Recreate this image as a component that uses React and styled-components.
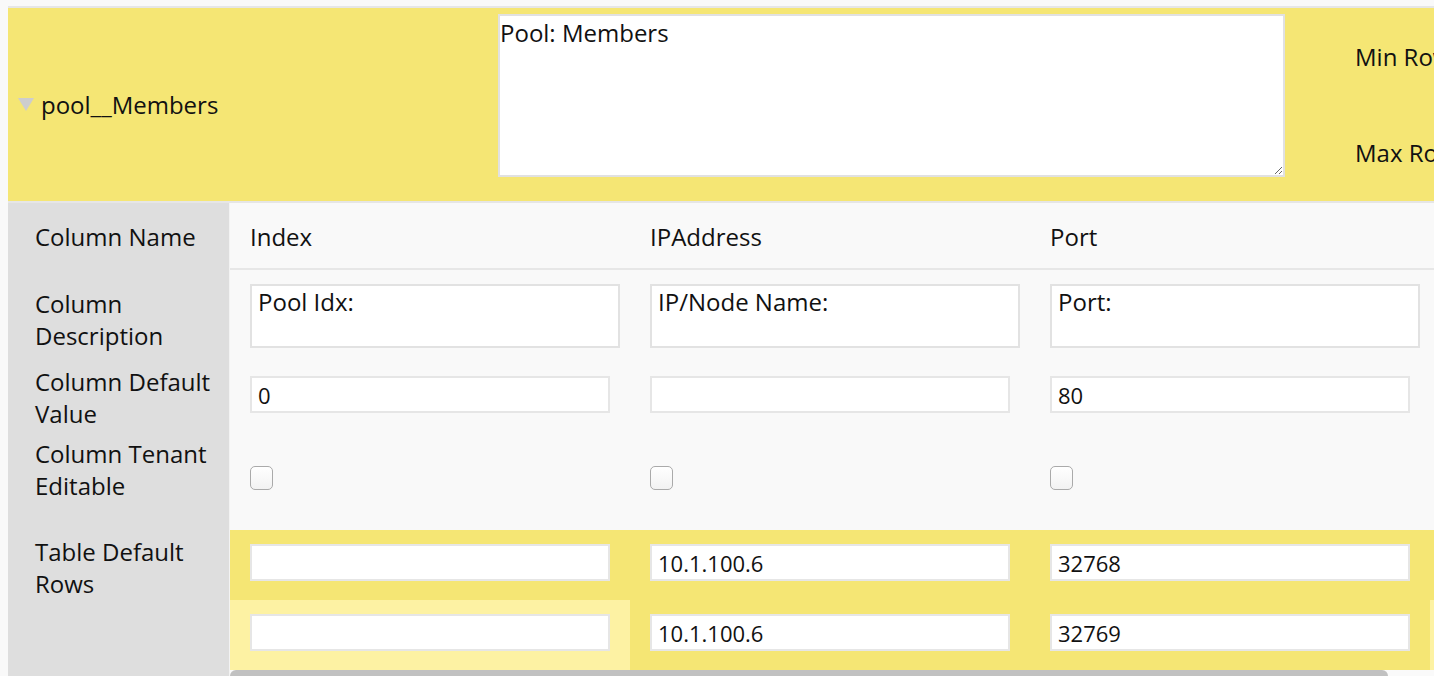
import React from 'react';
import styled, { createGlobalStyle } from 'styled-components';

const Global = createGlobalStyle`
  html, body {
    margin: 0;
    padding: 0;
    overflow: hidden;
    background: #f5f5f5;
  }
  body {
    font-family: "Open Sans", "DejaVu Sans", sans-serif;
    color: #111;
  }
  * { box-sizing: border-box; }
`;

const YELLOW = '#f5e674';
const LIGHT_YELLOW = '#fdf2a3';

const Page = styled.div`
  padding: 6px 0 0 8px;
  width: 2000px;
  background: #f9f9f9;
`;

const Frame = styled.div`
  background: #f9f9f9;
`;

const Header = styled.div`
  display: flex;
  height: 197px;
  background: ${YELLOW};
  border-top: 2px solid #e6e6e6;
  border-bottom: 2px solid #e6e6e6;
`;

const TitleCell = styled.div`
  width: 490px;
  flex: 0 0 490px;
  display: flex;
  align-items: center;
  gap: 7px;
  padding-left: 10px;
  font-size: 24px;
  line-height: 32px;
`;

const Caret = styled.span`
  width: 0;
  height: 0;
  border-left: 8px solid transparent;
  border-right: 8px solid transparent;
  border-top: 13px solid #cdcdcd;
  margin-top: -1px;
`;

const DescCell = styled.div`
  padding-top: 6px;
  flex: 0 0 787px;
`;

const BigArea = styled.textarea`
  display: block;
  width: 787px;
  height: 163px;
  margin: 0;
  border: 2px solid #e1e1e1;
  padding: 1px 0;
  background: #fff;
  font-family: "Open Sans", "DejaVu Sans", sans-serif;
  font-size: 24px;
  line-height: 32px;
  color: #111;
  outline: none;
`;

const LimitsCell = styled.div`
  padding: 33px 0 0 70px;
  display: flex;
  flex-direction: column;
  gap: 64px;
  font-size: 24px;
  line-height: 32px;
  white-space: nowrap;
`;

const Table = styled.div`
  display: grid;
  grid-template-columns: 222px 1fr;
`;

const Label = styled.div`
  background: #dedede;
  border-right: 1px solid #f3f3f3;
  height: ${p => p.$h}px;
  padding: ${p => p.$pt}px 8px 0 27px;
  font-size: 24px;
  line-height: 32px;
`;

const Cells = styled.div`
  display: flex;
  height: ${p => p.$h}px;
  background: ${p => (p.$yellow ? YELLOW : '#f9f9f9')};
  border-bottom: ${p => (p.$rule ? '2px solid #e7e7e7' : 'none')};
`;

const Stack = styled.div`
  display: flex;
  flex-direction: column;
`;

const Cell = styled.div`
  flex: 0 0 400px;
  padding: ${p => p.$pt}px 0 0 20px;
  background: ${p => (p.$light ? LIGHT_YELLOW : 'transparent')};
  font-size: 24px;
  line-height: 32px;
`;

const SmallArea = styled.textarea`
  display: block;
  width: 370px;
  height: 64px;
  margin: 0;
  border: 2px solid #e2e2e2;
  padding: 0 6px;
  background: #fff;
  resize: none;
  font-family: "Open Sans", "DejaVu Sans", sans-serif;
  font-size: 24px;
  line-height: 32px;
  color: #111;
  outline: none;
`;

const Field = styled.input`
  display: block;
  width: 360px;
  height: 37px;
  margin: 0;
  border: 2px solid #e6e6e6;
  padding: 0 6px;
  background: #fff;
  font-family: "Open Sans", "DejaVu Sans", sans-serif;
  font-size: 22px;
  color: #111;
  outline: none;
`;

const Check = styled.input.attrs({ type: 'checkbox' })`
  appearance: none;
  -webkit-appearance: none;
  display: block;
  width: 23px;
  height: 24px;
  margin: 0;
  border: 1px solid #aaaaaa;
  border-radius: 5px;
  background: linear-gradient(#ffffff, #f2f2f2);
`;

const Track = styled.div`
  height: 12px;
  background: #fafafa;
`;

const Thumb = styled.div`
  width: 1158px;
  height: 12px;
  border-radius: 6px;
  background: #c1c1c1;
`;

const columns = [
  { key: 'idx', name: 'Index', desc: 'Pool Idx:', def: '0', rows: ['', ''] },
  { key: 'ip', name: 'IPAddress', desc: 'IP/Node Name:', def: '', rows: ['10.1.100.6', '10.1.100.6'] },
  { key: 'port', name: 'Port', desc: 'Port:', def: '80', rows: ['32768', '32769'] },
  { key: 'next', name: '', desc: '', def: '', rows: ['', ''] },
];

export default function App() {
  return (
    <>
      <Global />
      <Page>
        <Frame>
          <Header>
            <TitleCell>
              <Caret />
              <span>pool__Members</span>
            </TitleCell>
            <DescCell>
              <BigArea defaultValue="Pool: Members" />
            </DescCell>
            <LimitsCell>
              <span>Min Rows</span>
              <span>Max Rows</span>
            </LimitsCell>
          </Header>

          <Table>
            <Label $h={67} $pt={18}>Column Name</Label>
            <Cells $h={67} $rule>
              {columns.map(c => (
                <Cell key={c.key} $pt={18}>{c.name}</Cell>
              ))}
            </Cells>

            <Label $h={94} $pt={18}>Column Description</Label>
            <Cells $h={94}>
              {columns.map(c => (
                <Cell key={c.key} $pt={14}>
                  <SmallArea defaultValue={c.desc} />
                </Cell>
              ))}
            </Cells>

            <Label $h={70} $pt={2}>Column Default Value</Label>
            <Cells $h={70}>
              {columns.map(c => (
                <Cell key={c.key} $pt={12}>
                  <Field defaultValue={c.def} />
                </Cell>
              ))}
            </Cells>

            <Label $h={96} $pt={4}>Column Tenant Editable</Label>
            <Cells $h={96}>
              {columns.map(c => (
                <Cell key={c.key} $pt={32}>
                  <Check />
                </Cell>
              ))}
            </Cells>

            <Label $h={140} $pt={6}>Table Default Rows</Label>
            <Stack>
              {[0, 1].map(r => (
                <Cells key={r} $h={70} $yellow>
                  {columns.map((c, i) => (
                    <Cell key={c.key} $pt={14} $light={r === 1 && (i === 0 || i === 3)}>
                      <Field defaultValue={c.rows[r]} />
                    </Cell>
                  ))}
                </Cells>
              ))}
            </Stack>

            <Label $h={12} $pt={0} />
            <Track>
              <Thumb />
            </Track>
          </Table>
        </Frame>
      </Page>
    </>
  );
}
